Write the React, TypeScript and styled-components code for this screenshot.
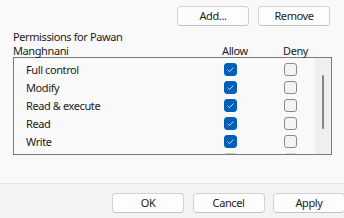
import React from 'react';
import styled, { createGlobalStyle } from 'styled-components';

const GlobalStyle = createGlobalStyle`
  html, body {
    margin: 0;
    padding: 0;
    background: #f9f9f9;
    overflow: hidden;
  }
  body {
    font-family: "Segoe UI", "Noto Sans", "Liberation Sans", sans-serif;
    font-size: 11px;
    letter-spacing: -0.4px;
    color: #1b1b1b;
  }
`;

const Dialog = styled.div`
  width: 344px;
  height: 218px;
  display: flex;
  flex-direction: column;
`;

const Content = styled.div`
  height: 183px;
  background: #f9f9f9;
  padding: 6px 14px 0 13px;
  box-sizing: border-box;
`;

const ButtonRow = styled.div<{ $padLeft?: number }>`
  display: flex;
  justify-content: ${p => (p.$padLeft !== undefined ? 'flex-start' : 'flex-end')};
  padding-left: ${p => p.$padLeft ?? 0}px;
  gap: ${p => (p.$padLeft !== undefined ? 8.5 : 9)}px;
`;

const Button = styled.button`
  width: 72px;
  height: 20px;
  flex: none;
  padding: 0;
  background: #fdfdfd;
  border: 1px solid #d3d3d3;
  border-bottom-color: #c4c4c4;
  border-radius: 4px;
  font-family: inherit;
  font-size: 11px;
  letter-spacing: -0.4px;
  color: #1b1b1b;
  line-height: 18px;
`;

const Header = styled.div`
  display: flex;
  align-items: flex-end;
  margin-top: 4px;
  height: 27px;
`;

const HeaderLabel = styled.div`
  width: 130px;
  line-height: 13.5px;
`;

const ColHead = styled.div<{ $left: number }>`
  width: 0;
  white-space: nowrap;
  margin-left: ${p => p.$left}px;
  line-height: 13.5px;
`;

const ListBox = styled.div`
  width: 319px;
  height: 98px;
  box-sizing: border-box;
  border: 1px solid #7a7a7a;
  background: #f9f9f9;
  display: flex;
  overflow: hidden;
`;

const Rows = styled.div`
  flex: 1;
  padding-top: 2.5px;
`;

const Row = styled.div`
  height: 18px;
  display: grid;
  grid-template-columns: 210px 60px 1fr;
  align-items: center;
`;

const RowLabel = styled.span`
  padding-left: 12px;
`;

const Box = styled.span<{ $checked?: boolean; $disabled?: boolean }>`
  width: 13px;
  height: 13px;
  box-sizing: border-box;
  border-radius: 3px;
  display: flex;
  align-items: center;
  justify-content: center;
  background: ${p => (p.$disabled ? (p.$checked ? '#c5c5c5' : '#f7f7f7') : p.$checked ? '#005fb8' : '#f4f4f4')};
  border: 1px solid
    ${p => (p.$disabled ? (p.$checked ? '#c5c5c5' : '#d4d4d4') : p.$checked ? '#005fb8' : '#8a8a8a')};
`;

const Scrollbar = styled.div`
  width: 16px;
  background: #efefef;
  display: flex;
  justify-content: center;
  padding-top: 17px;
  box-sizing: border-box;
`;

const Thumb = styled.div`
  width: 2px;
  height: 54px;
  border-radius: 1px;
  background: #858585;
`;

const Footer = styled.div`
  flex: 1;
  border-top: 1px solid #e6e6e6;
  background: #f3f3f3;
  padding-top: 9px;
  box-sizing: border-box;
`;

const Check = () => (
  <svg width="9" height="9" viewBox="0 0 9 9">
    <path d="M1.6 4.8 L3.5 6.6 L7.4 2.6" fill="none" stroke="#dfe9f5" strokeWidth="0.9" />
  </svg>
);

const CheckBox = ({ checked, disabled }: { checked?: boolean; disabled?: boolean }) => (
  <Box $checked={checked} $disabled={disabled}>
    {checked && !disabled && <Check />}
  </Box>
);

// last row is scrolled mostly out of view: only the tops of its boxes show
const permissions = [
  { name: 'Full control', allow: true },
  { name: 'Modify', allow: true },
  { name: 'Read & execute', allow: true },
  { name: 'Read', allow: true },
  { name: 'Write', allow: true },
  { name: '', allow: true, disabled: true },
];

const App = () => (
  <>
    <GlobalStyle />
    <Dialog>
      <Content>
        <ButtonRow>
          <Button>Add...</Button>
          <Button>Remove</Button>
        </ButtonRow>
        <Header>
          <HeaderLabel>Permissions for Pawan Manghnani</HeaderLabel>
          <ColHead $left={79}>Allow</ColHead>
          <ColHead $left={61}>Deny</ColHead>
        </Header>
        <ListBox>
          <Rows>
            {permissions.map((p, i) => (
              <Row key={i}>
                <RowLabel>{p.name}</RowLabel>
                <CheckBox checked={p.allow} disabled={p.disabled} />
                <CheckBox disabled={p.disabled} />
              </Row>
            ))}
          </Rows>
          <Scrollbar>
            <Thumb />
          </Scrollbar>
        </ListBox>
      </Content>
      <Footer>
        <ButtonRow $padLeft={112}>
          <Button>OK</Button>
          <Button>Cancel</Button>
          <Button>Apply</Button>
        </ButtonRow>
      </Footer>
    </Dialog>
  </>
);

export default App;
